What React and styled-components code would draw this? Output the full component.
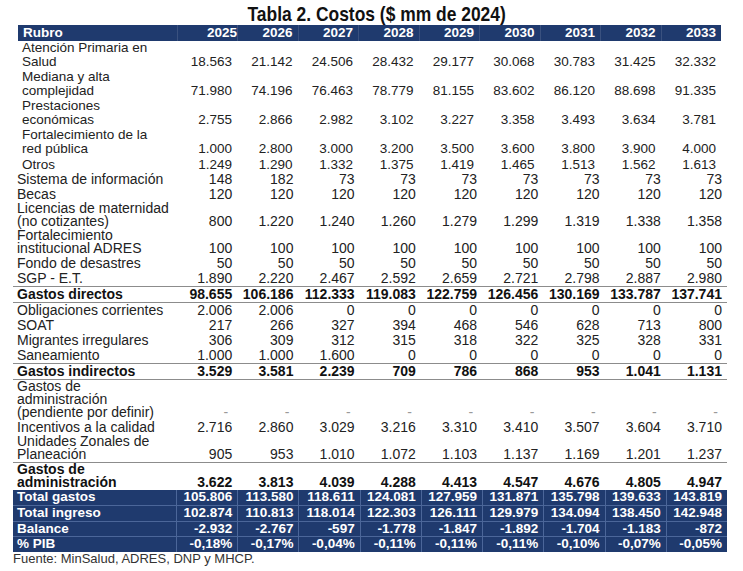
import React from 'react';
import styled, { createGlobalStyle } from 'styled-components';

const GlobalStyle = createGlobalStyle`
  html, body {
    margin: 0;
    padding: 0;
    background: #fff;
  }
  body {
    font-family: "Liberation Sans", Arial, sans-serif;
    color: #1c1c1c;
  }
`;

const NAVY = '#1f3a6e';

const YEARS = [2025, 2026, 2027, 2028, 2029, 2030, 2031, 2032, 2033];

const upperRows = [
  ['Atención Primaria en\nSalud', ['18.563', '21.142', '24.506', '28.432', '29.177', '30.068', '30.783', '31.425', '32.332']],
  ['Mediana y alta\ncomplejidad', ['71.980', '74.196', '76.463', '78.779', '81.155', '83.602', '86.120', '88.698', '91.335']],
  ['Prestaciones\neconómicas', ['2.755', '2.866', '2.982', '3.102', '3.227', '3.358', '3.493', '3.634', '3.781']],
  ['Fortalecimiento de la\nred pública', ['1.000', '2.800', '3.000', '3.200', '3.500', '3.600', '3.800', '3.900', '4.000']],
  ['Otros', ['1.249', '1.290', '1.332', '1.375', '1.419', '1.465', '1.513', '1.562', '1.613']],
];

const dash = Array(9).fill('-');

const lowerRows = [
  { label: 'Sistema de información', values: ['148', '182', '73', '73', '73', '73', '73', '73', '73'] },
  { label: 'Becas', values: Array(9).fill('120') },
  { label: 'Licencias de maternidad\n(no cotizantes)', values: ['800', '1.220', '1.240', '1.260', '1.279', '1.299', '1.319', '1.338', '1.358'] },
  { label: 'Fortalecimiento\ninstitucional ADRES', values: Array(9).fill('100') },
  { label: 'Fondo de desastres', values: Array(9).fill('50') },
  { label: 'SGP - E.T.', values: ['1.890', '2.220', '2.467', '2.592', '2.659', '2.721', '2.798', '2.887', '2.980'] },
  { label: 'Gastos directos', bold: true, rule: 'both', values: ['98.655', '106.186', '112.333', '119.083', '122.759', '126.456', '130.169', '133.787', '137.741'] },
  { label: 'Obligaciones corrientes', values: ['2.006', '2.006', '0', '0', '0', '0', '0', '0', '0'] },
  { label: 'SOAT', values: ['217', '266', '327', '394', '468', '546', '628', '713', '800'] },
  { label: 'Migrantes irregulares', values: ['306', '309', '312', '315', '318', '322', '325', '328', '331'] },
  { label: 'Saneamiento', values: ['1.000', '1.000', '1.600', '0', '0', '0', '0', '0', '0'] },
  { label: 'Gastos indirectos', bold: true, rule: 'both', values: ['3.529', '3.581', '2.239', '709', '786', '868', '953', '1.041', '1.131'] },
  { label: 'Gastos de\nadministración\n(pendiente por definir)', values: dash, muted: true },
  { label: 'Incentivos a la calidad', values: ['2.716', '2.860', '3.029', '3.216', '3.310', '3.410', '3.507', '3.604', '3.710'] },
  { label: 'Unidades Zonales de\nPlaneación', rule: 'bottom', values: ['905', '953', '1.010', '1.072', '1.103', '1.137', '1.169', '1.201', '1.237'] },
  { label: 'Gastos de\nadministración', bold: true, values: ['3.622', '3.813', '4.039', '4.288', '4.413', '4.547', '4.676', '4.805', '4.947'] },
];

const totalRows = [
  ['Total gastos', ['105.806', '113.580', '118.611', '124.081', '127.959', '131.871', '135.798', '139.633', '143.819']],
  ['Total ingreso', ['102.874', '110.813', '118.014', '122.303', '126.111', '129.979', '134.094', '138.450', '142.948']],
  ['Balance', ['-2.932', '-2.767', '-597', '-1.778', '-1.847', '-1.892', '-1.704', '-1.183', '-872']],
  ['% PIB', ['-0,18%', '-0,17%', '-0,04%', '-0,11%', '-0,11%', '-0,11%', '-0,10%', '-0,07%', '-0,05%']],
];

const Page = styled.div`
  width: 743px;
  height: 571px;
  overflow: hidden;
  background: #fff;
`;

const Title = styled.h1`
  margin: 0;
  height: 25px;
  box-sizing: border-box;
  padding: 3px 0 0 10px;
  text-align: center;
  font-weight: 700;
  font-size: 21px;
  line-height: 22px;
  color: #111;
`;

/* no narrow face installed, so squeeze the regular bold to Arial Narrow width */
const TitleText = styled.span`
  display: inline-block;
  transform: scaleX(0.83);
  transform-origin: center;
  white-space: nowrap;
`;

const Block = styled.div`
  margin-left: ${(p) => (p.$inset ? 18 : 13)}px;
  width: ${(p) => (p.$inset ? 703 : 714)}px;
`;

const ruleLine = '1.5px solid #8c8c8c';

// upper block keeps even 14.5px lines; lower block packs wrapped labels tighter
const lineHeight = (p) => {
  if (p.$inset) return p.$lines > 1 ? 14.5 : 15;
  return p.$lines > 1 ? 13 : 15;
};

const Row = styled.div`
  display: grid;
  grid-template-columns: ${(p) => (p.$inset ? '158.5px repeat(9, 60.5px)' : '163px repeat(9, 1fr)')};
  font-size: ${(p) => (p.$inset ? 13.5 : 14)}px;
  line-height: ${(p) => lineHeight(p)}px;
  padding: ${(p) => (!p.$inset && p.$lines > 1 ? '0.5px 0' : '0')};
  font-weight: ${(p) => (p.$bold ? 700 : 400)};
  color: ${(p) => (p.$bold ? '#111' : '#222')};
  border-top: ${(p) => (p.$rule === 'both' ? ruleLine : 'none')};
  border-bottom: ${(p) => (p.$rule ? ruleLine : 'none')};
`;

const HeaderRow = styled(Row)`
  height: 15.5px;
  align-items: center;
  background: ${NAVY};
  color: #fff;
  font-weight: 700;
`;

const TotalRow = styled(Row)`
  box-sizing: border-box;
  height: 15.5px;
  align-items: center;
  background: ${NAVY};
  color: #fff;
  font-size: 13.5px;
  font-weight: 700;
  & + & {
    border-top: 1px solid #4b6699;
  }
`;

const Label = styled.div`
  padding-left: 4px;
  white-space: pre-line;
`;

const Num = styled.div`
  align-self: end;
  text-align: right;
  padding-right: ${(p) => (p.$muted ? 9 : 5)}px;
  color: ${(p) => (p.$muted ? '#9a9a9a' : 'inherit')};
  white-space: nowrap;
`;

const HeadCell = styled.div`
  text-align: ${(p) => (p.$left ? 'left' : 'right')};
  padding: ${(p) => (p.$left ? '0 0 0 5px' : `0 ${p.$pad}px 0 0`)};
  border-left: ${(p) => (p.$left ? 'none' : '1px solid rgba(255, 255, 255, 0.12)')};
  height: 100%;
  line-height: 15.5px;
`;

const TotalCell = styled.div`
  height: 100%;
  line-height: 14.5px;
  text-align: ${(p) => (p.$left ? 'left' : 'right')};
  padding: ${(p) => (p.$left ? '0 0 0 4px' : '0 5px 0 0')};
  border-left: ${(p) => (p.$left ? 'none' : '1px solid #4b6699')};
  white-space: nowrap;
`;

const Source = styled.div`
  padding-left: 13px;
  font-size: 13px;
  line-height: 13px;
  color: #333;
`;

const linesOf = (label) => label.split('\n').length;

export default function App() {
  return (
    <Page>
      <GlobalStyle />
      <Title>
        <TitleText>Tabla 2. Costos ($ mm de 2024)</TitleText>
      </Title>

      <Block $inset>
        <HeaderRow $inset>
          <HeadCell $left>Rubro</HeadCell>
          {YEARS.map((y, i) => (
            <HeadCell key={y} $pad={i === 0 ? 0 : 5}>{y}</HeadCell>
          ))}
        </HeaderRow>
        {upperRows.map(([label, values]) => (
          <Row $inset $lines={linesOf(label)} key={label}>
            <Label>{label}</Label>
            {values.map((v, i) => (
              <Num key={i}>{v}</Num>
            ))}
          </Row>
        ))}
      </Block>

      <Block>
        {lowerRows.map((r) => (
          <Row key={r.label} $lines={linesOf(r.label)} $bold={r.bold} $rule={r.rule}>
            <Label>{r.label}</Label>
            {r.values.map((v, i) => (
              <Num key={i} $muted={r.muted}>{v}</Num>
            ))}
          </Row>
        ))}
        {totalRows.map(([label, values]) => (
          <TotalRow key={label}>
            <TotalCell $left>{label}</TotalCell>
            {values.map((v, i) => (
              <TotalCell key={i}>{v}</TotalCell>
            ))}
          </TotalRow>
        ))}
      </Block>

      <Source>Fuente: MinSalud, ADRES, DNP y MHCP.</Source>
    </Page>
  );
}
